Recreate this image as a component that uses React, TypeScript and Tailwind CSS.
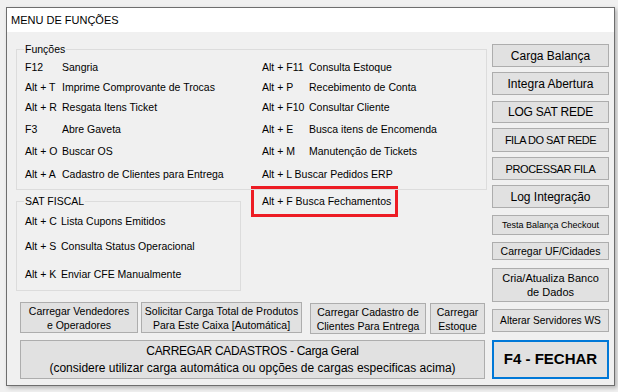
import type { ReactNode } from 'react';

type Row = { k: string; d?: string; h: string };

const leftRows: Row[] = [
  { k: 'F12', d: 'Sangria', h: 'h-[20px]' },
  { k: 'Alt + T', d: 'Imprime Comprovante de Trocas', h: 'h-[19px]' },
  { k: 'Alt + R', d: 'Resgata Itens Ticket', h: 'h-[22px]' },
  { k: 'F3', d: 'Abre Gaveta', h: 'h-[22px]' },
  { k: 'Alt + O', d: 'Buscar OS', h: 'h-[22px]' },
  { k: 'Alt + A', d: 'Cadastro de Clientes para Entrega', h: 'h-[24px]' },
];

const rightRows: Row[] = [
  { k: 'Alt + F11', d: 'Consulta Estoque', h: 'h-[20px]' },
  { k: 'Alt + P', d: 'Recebimento de Conta', h: 'h-[19px]' },
  { k: 'Alt + F10', d: 'Consultar Cliente', h: 'h-[22px]' },
  { k: 'Alt + E', d: 'Busca itens de Encomenda', h: 'h-[22px]' },
  { k: 'Alt + M', d: 'Manutenção de Tickets', h: 'h-[22px]' },
  { k: 'Alt + L Buscar Pedidos ERP', h: 'h-[24px]' },
];

const satRows: Row[] = [
  { k: 'Alt + C', d: 'Lista Cupons Emitidos', h: 'h-[20px]' },
  { k: 'Alt + S', d: 'Consulta Status Operacional', h: 'h-[30px]' },
  { k: 'Alt + K', d: 'Enviar CFE Manualmente', h: 'h-[26px]' },
];

function ShortcutColumn({ rows, keyWidth }: { rows: Row[]; keyWidth: string }) {
  return (
    <div className="flex flex-col">
      {rows.map((r) => (
        <div key={r.k} className={`flex items-center whitespace-nowrap ${r.h}`}>
          {r.d ? (
            <>
              <span className={keyWidth}>{r.k}</span>
              <span>{r.d}</span>
            </>
          ) : (
            <span>{r.k}</span>
          )}
        </div>
      ))}
    </div>
  );
}

function GroupBox({ title, className, children }: { title: string; className: string; children: ReactNode }) {
  return (
    <div className={`relative border border-[#dcdcdc] ${className}`}>
      <span className="absolute left-[7px] -top-[7px] bg-[#f0f0f0] px-[1px] leading-[13px]">{title}</span>
      {children}
    </div>
  );
}

function Btn({ className, children }: { className: string; children: ReactNode }) {
  return (
    <div
      className={`flex items-center justify-center text-center border border-[#adadad] bg-[#e1e1e1] leading-[14px] ${className}`}
    >
      {children}
    </div>
  );
}

export default function App() {
  return (
    <div className="w-[618px] h-[392px] bg-[#f0f0f0] pl-[6px] pt-[7px] font-['Liberation_Sans',Arial,sans-serif] text-[10.5px] text-black">
      <div className="w-[609px] h-[379px] border border-[#6e6e6e] bg-[#f0f0f0] flex flex-col shadow-[2px_2px_4px_rgba(0,0,0,0.25)]">
        <div className="h-[24px] bg-white flex items-center pl-[4px] text-[11px] shrink-0">MENU DE FUNÇÕES</div>

        <div className="flex pt-[12px] pl-[9px]">
          {/* left side */}
          <div className="w-[471px] flex flex-col">
            <GroupBox title="Funções" className="mt-[5px] h-[141px]">
              <div className="grid grid-cols-[237px_1fr] pt-[8px] pl-[8px]">
                <ShortcutColumn rows={leftRows} keyWidth="w-[37px]" />
                <ShortcutColumn rows={rightRows} keyWidth="w-[47px]" />
              </div>
            </GroupBox>

            <div className="flex items-start">
              <GroupBox title="SAT FISCAL" className="mt-[11px] w-[225px] h-[90px]">
                <div className="pt-[10px] pl-[8px]">
                  <ShortcutColumn rows={satRows} keyWidth="w-[36px]" />
                </div>
              </GroupBox>
              <div className="-mt-[4px] ml-[10px] w-[147px] h-[31px] border-[3px] border-[#ed1c24] flex items-center pl-[8px] whitespace-nowrap">
                Alt + F Busca Fechamentos
              </div>
            </div>

            <div className="flex items-start mt-[11px] h-[32px] pl-[4px]">
              <Btn className="w-[118px] h-[31px]">
                Carregar Vendedores
                <br />e Operadores
              </Btn>
              <Btn className="ml-[3px] w-[161px] h-[31px]">
                Solicitar Carga Total de Produtos
                <br />
                Para Este Caixa [Automática]
              </Btn>
              <Btn className="ml-[8px] mt-[1px] w-[116px] h-[31px]">
                Carregar Cadastro de
                <br />
                Clientes Para Entrega
              </Btn>
              <Btn className="ml-[4px] mt-[1px] w-[55px] h-[31px]">
                Carregar
                <br />
                Estoque
              </Btn>
            </div>

            <Btn className="mt-[6px] ml-[4px] w-[465px] h-[39px] text-[12px] leading-[17px] flex-col">
              <span className="tracking-[-0.3px]">CARREGAR CADASTROS - Carga Geral</span>
              <span>(considere utilizar carga automática ou opções de cargas especificas acima)</span>
            </Btn>
          </div>

          {/* right side buttons */}
          <div className="ml-[5px] w-[117px] flex flex-col">
            <Btn className="h-[23px] text-[12px]">Carga Balança</Btn>
            <Btn className="mt-[5px] h-[23px] text-[12px]">Integra Abertura</Btn>
            <Btn className="mt-[6px] h-[22px] text-[12px] tracking-[-0.2px]">LOG SAT REDE</Btn>
            <Btn className="mt-[5px] h-[24px] text-[11px] tracking-[-0.5px]">FILA DO SAT REDE</Btn>
            <Btn className="mt-[5px] h-[23px] text-[11px] tracking-[-0.4px]">PROCESSAR FILA</Btn>
            <Btn className="mt-[5px] h-[23px] text-[12px]">Log Integração</Btn>
            <Btn className="mt-[7px] h-[20px] text-[9px]">Testa Balança Checkout</Btn>
            <Btn className="mt-[7px] h-[18px] text-[10.5px]">Carregar UF/Cidades</Btn>
            <Btn className="mt-[8px] h-[34px] text-[11px]">
              Cria/Atualiza Banco
              <br />
              de Dados
            </Btn>
            <Btn className="mt-[7px] h-[23px] text-[10.2px]">Alterar Servidores WS</Btn>
            <div className="mt-[8px] h-[39px] border-2 border-[#0078d7] bg-[#e1e1e1] flex items-center justify-center text-[15px] font-bold">
              F4 - FECHAR
            </div>
          </div>
        </div>
      </div>
    </div>
  );
}
